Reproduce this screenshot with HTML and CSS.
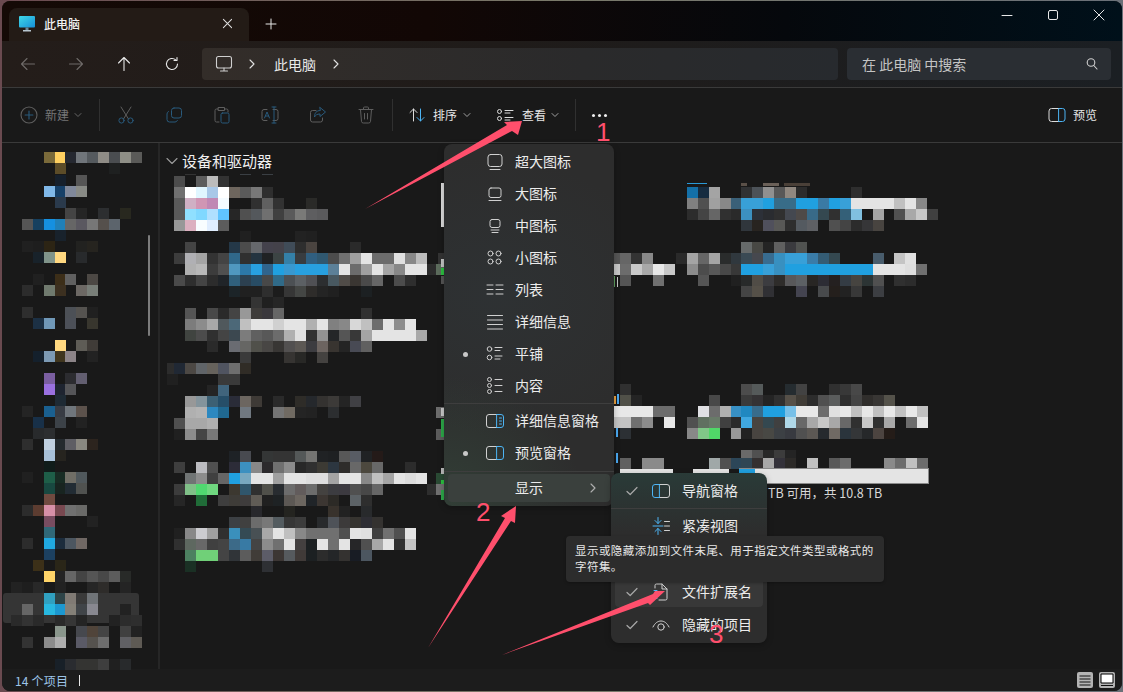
FILE: index.html
```html
<!DOCTYPE html>
<html lang="zh-CN">
<head>
<meta charset="utf-8">
<title>此电脑</title>
<link rel="stylesheet" href="styles.css">
</head>
<body>
<div class="window">
  <header class="titlebar">
    <div class="tab">
      <svg class="tab-ico" viewBox="0 0 18 18"><defs><linearGradient id="pc" x1="0" y1="0" x2="1" y2="1"><stop offset="0" stop-color="#3fd8e8"/><stop offset="1" stop-color="#1690d8"/></linearGradient></defs><rect x="1" y="1" width="16" height="11.5" rx="1" fill="url(#pc)"/><rect x="7.5" y="12.5" width="3" height="2.5" fill="#6b8b9b"/><rect x="5" y="15" width="8" height="1.5" fill="#b8c6cf"/></svg>
      <span class="tab-text">此电脑</span>
      <svg class="tab-close" viewBox="0 0 12 12"><path d="M1.5 1.5l9 9M10.5 1.5l-9 9"/></svg>
    </div>
    <svg class="tab-add" viewBox="0 0 12 12"><path d="M6 1v10M1 6h10"/></svg>
    <div class="winctl">
      <div class="wbtn"><svg viewBox="0 0 12 12"><path d="M1 6.5h10"/></svg></div>
      <div class="wbtn"><svg viewBox="0 0 12 12"><rect x="1.5" y="1.5" width="9" height="9" rx="1.5"/></svg></div>
      <div class="wbtn"><svg viewBox="0 0 12 12"><path d="M1 1l10 10M11 1L1 11"/></svg></div>
    </div>
  </header>

  <nav class="navbar">
    <div class="nbtn dim"><svg viewBox="0 0 16 16"><path d="M14.5 8h-13M7 2.5L1.5 8 7 13.5"/></svg></div>
    <div class="nbtn dim"><svg viewBox="0 0 16 16"><path d="M1.5 8h13M9 2.5L14.5 8 9 13.5"/></svg></div>
    <div class="nbtn"><svg viewBox="0 0 16 16"><path d="M8 14.5v-13M2.5 7L8 1.5 13.5 7"/></svg></div>
    <div class="nbtn"><svg viewBox="0 0 16 16"><path d="M13.5 8a5.5 5.5 0 1 1-1.8-4.1M13 1.5v3h-3"/></svg></div>
    <div class="addr">
      <svg class="addr-pc" viewBox="0 0 18 18"><rect x="1.5" y="1.5" width="15" height="11.5" rx="2"/><path d="M9 13v2.5M5.5 16h7"/></svg>
      <svg class="addr-chev" viewBox="0 0 8 12"><path d="M2 2l4 4-4 4"/></svg>
      <span class="addr-text">此电脑</span>
      <svg class="addr-chev" viewBox="0 0 8 12"><path d="M2 2l4 4-4 4"/></svg>
    </div>
    <div class="search">
      <span>在 此电脑 中搜索</span>
      <svg viewBox="0 0 14 14"><circle cx="6" cy="5.5" r="3.8"/><path d="M8.8 8.5l3.2 3.5"/></svg>
    </div>
  </nav>

  <div class="toolbar">
    <div class="tb-new">
      <svg class="ic" viewBox="0 0 18 18"><circle cx="9" cy="9" r="7.2" class="g"/><path d="M9 5.5v7M5.5 9h7" class="b"/></svg>
      <span class="dimtxt">新建</span>
      <svg class="chev" viewBox="0 0 8 6"><path d="M1 1.5l3 3 3-3"/></svg>
    </div>
    <div class="tb-div"></div>
    <div class="tb-ico"><svg class="ic" viewBox="0 0 20 20"><path d="M5 2l7.5 12M15 2L7.500 14" class="g"/><circle cx="5.500" cy="15.500" r="2.600" class="b"/><circle cx="14.500" cy="15.500" r="2.600" class="b"/></svg></div>
    <div class="tb-ico"><svg class="ic" viewBox="0 0 20 20"><rect x="7.500" y="3" width="10" height="10" rx="2.500" class="b"/><path d="M4.500 6.500A2.500 2.500 0 0 0 3 9v5.500A2.500 2.500 0 0 0 5.500 17H11a2.500 2.500 0 0 0 2.400-1.500" class="b"/></svg></div>
    <div class="tb-ico"><svg class="ic" viewBox="0 0 20 20"><path d="M6 4H4.500A1.500 1.500 0 0 0 3 5.500v10A1.500 1.500 0 0 0 4.500 17H7M13 4h1.500A1.500 1.500 0 0 1 16 5.500V7M6.500 2.500h6v3h-6z" class="g"/><rect x="9" y="8" width="8" height="10" rx="1.500" class="b"/></svg></div>
    <div class="tb-ico"><svg class="ic" viewBox="0 0 20 20"><path d="M7 4.500H4A2 2 0 0 0 2 6.500v7a2 2 0 0 0 2 2h3M13 4.500h3a2 2 0 0 1 2 2v7a2 2 0 0 1-2 2h-3" class="g"/><path d="M4.500 13l2.500-6 2.500 6M5.500 11h3M12 2h4M12 18h4M14 2v16" class="b"/></svg></div>
    <div class="tb-ico"><svg class="ic" viewBox="0 0 20 20"><path d="M14.500 13v2a2 2 0 0 1-2 2H4.500a2 2 0 0 1-2-2V7.500a2 2 0 0 1 2-2H8" class="g"/><path d="M12 2.500L17.500 7 12 11.500V9c-3 0-4.500 1-5.500 3 0-4 2-6.500 5.500-6.500z" class="b"/></svg></div>
    <div class="tb-ico"><svg class="ic" viewBox="0 0 20 20"><path d="M3 4.500h14M7.500 4.500V3a1 1 0 0 1 1-1h3a1 1 0 0 1 1 1v1.500M4.500 4.500l1 12a1.800 1.800 0 0 0 1.800 1.500h5.400a1.800 1.800 0 0 0 1.800-1.500l1-12M8.500 8.500v5.500M11.500 8.500v5.500" class="g"/></svg></div>
    <div class="tb-div tb-div2"></div>
    <div class="tb-sort">
      <svg class="ic" viewBox="0 0 20 20"><path d="M6.500 16V4M3 7.500L6.500 4 10 7.500" class="w"/><path d="M13.500 4v12M10 12.500l3.500 3.500 3.500-3.500" class="bl"/></svg>
      <span>排序</span>
      <svg class="chev" viewBox="0 0 8 6"><path d="M1 1.500l3 3 3-3"/></svg>
    </div>
    <div class="tb-view">
      <svg class="ic" viewBox="0 0 20 20"><circle cx="4.500" cy="6.500" r="2" class="w"/><circle cx="4.500" cy="13.500" r="2" class="w"/><path d="M10 5.500h8M10 8h5M10 12.500h8M10 15h5" class="w"/></svg>
      <span>查看</span>
      <svg class="chev" viewBox="0 0 8 6"><path d="M1 1.500l3 3 3-3"/></svg>
    </div>
    <div class="tb-div tb-div3"></div>
    <div class="tb-more"><i></i><i></i><i></i></div>
    <div class="tb-preview">
      <svg class="ic" viewBox="0 0 20 20"><path d="M12 3.500H4.500A2.500 2.500 0 0 0 2 6v8a2.500 2.500 0 0 0 2.500 2.500H12" class="w"/><path d="M12 3.500h3.500A2.500 2.500 0 0 1 18 6v8a2.500 2.500 0 0 1-2.500 2.500H12z" class="bl"/></svg>
      <span>预览</span>
    </div>
  </div>

  <div class="content">
    <aside class="sidebar"><div class="selrow"></div><div class="sbthumb"></div></aside>
    <main class="main">
      <div class="section">
        <svg viewBox="0 0 12 8"><path d="M1 1.500l5 5 5-5"/></svg>
        <span>设备和驱动器</span>
      </div>
    </main>
  </div>

  <footer class="status">
    <span class="count">14 个项目</span><i class="caret"></i>
    <div class="vbtns">
      <div class="vbtn"><svg viewBox="0 0 16 16"><path d="M2.500 4h11M2.500 7h11M2.500 10h11M2.500 13h11"/></svg></div>
      <div class="vbtn"><svg viewBox="0 0 16 16"><rect x="2" y="2" width="12" height="9" fill="#fff" stroke="#000"/><path d="M2 13.500h12"/></svg></div>
    </div>
  </footer>
</div>

<svg class="mosaic" id="mosaic" viewBox="0 0 1123 692" aria-hidden="true"></svg>
<span class="freeinfo">TB 可用，共 10.8 TB</span>

<div class="menu">
  <div class="item"><span class="mark"></span><svg class="mi" viewBox="0 0 20 20"><rect x="3" y="2.500" width="14" height="12" rx="2.500"/><path d="M5 17.500h10"/></svg><span>超大图标</span></div>
  <div class="item"><span class="mark"></span><svg class="mi" viewBox="0 0 20 20"><rect x="4" y="4" width="12" height="9.500" rx="2"/><path d="M4 16.500h12"/></svg><span>大图标</span></div>
  <div class="item"><span class="mark"></span><svg class="mi" viewBox="0 0 20 20"><rect x="5" y="3.500" width="10" height="8" rx="2"/><path d="M6 14h8M7 16.500h6"/></svg><span>中图标</span></div>
  <div class="item"><span class="mark"></span><svg class="mi" viewBox="0 0 20 20"><circle cx="5.500" cy="5.500" r="2.500"/><circle cx="13.500" cy="5.500" r="2.500"/><circle cx="5.500" cy="13.500" r="2.500"/><circle cx="13.500" cy="13.500" r="2.500"/></svg><span>小图标</span></div>
  <div class="item"><span class="mark"></span><svg class="mi" viewBox="0 0 20 20"><path d="M2 5h6M2 9.500h6M2 14h6M11 5h7M11 9.500h7M11 14h7"/></svg><span>列表</span></div>
  <div class="item"><span class="mark"></span><svg class="mi" viewBox="0 0 20 20"><path d="M2.500 3.500h15M2.500 8h15M2.500 12.500h15M2.500 17h15"/></svg><span>详细信息</span></div>
  <div class="item"><span class="mark"><i></i></span><svg class="mi" viewBox="0 0 20 20"><circle cx="4.500" cy="5" r="2.300"/><circle cx="4.500" cy="13.500" r="2.300"/><path d="M10 3.500h7M10 6.500h5M10 12h7M10 15h5"/></svg><span>平铺</span></div>
  <div class="item"><span class="mark"></span><svg class="mi" viewBox="0 0 20 20"><circle cx="4.500" cy="3.500" r="2"/><circle cx="4.500" cy="9.500" r="2"/><circle cx="4.500" cy="15.500" r="2"/><path d="M10 3.500h7M10 9.500h7M10 15.500h7"/></svg><span>内容</span></div>
  <div class="sep"></div>
  <div class="item"><span class="mark"></span><svg class="mi" viewBox="0 0 20 20"><path d="M12 3.500H4A2.500 2.500 0 0 0 1.500 6v8A2.500 2.500 0 0 0 4 16.500h8"/><path class="bl" d="M12 3.500h4A2.500 2.500 0 0 1 18.500 6v8a2.500 2.500 0 0 1-2.500 2.500h-4zM14.500 7h2M14.500 10h2M14.500 13h2"/></svg><span>详细信息窗格</span></div>
  <div class="item"><span class="mark"><i></i></span><svg class="mi" viewBox="0 0 20 20"><path d="M12 3.500H4A2.500 2.500 0 0 0 1.500 6v8A2.500 2.500 0 0 0 4 16.500h8"/><path class="bl" d="M12 3.500h4A2.500 2.500 0 0 1 18.500 6v8a2.500 2.500 0 0 1-2.500 2.500h-4z"/></svg><span>预览窗格</span></div>
  <div class="sep sep2"></div>
  <div class="item show"><span class="mark"></span><span class="mi"></span><span>显示</span><svg class="more" viewBox="0 0 8 12"><path d="M2 2l4 4-4 4"/></svg></div>
</div>

<div class="submenu">
  <div class="item"><span class="mark"><svg class="check" viewBox="0 0 12 10"><path d="M1 5.500L4.200 8.500 11 1.500"/></svg></span><svg class="mi" viewBox="0 0 20 20"><path d="M8 3.500h8A2.500 2.500 0 0 1 18.500 6v8a2.500 2.500 0 0 1-2.500 2.500H8"/><path class="bl" d="M8 3.500H4A2.500 2.500 0 0 0 1.500 6v8A2.500 2.500 0 0 0 4 16.500h4z"/></svg><span>导航窗格</span></div>
  <div class="sep"></div>
  <div class="item"><span class="mark"></span><svg class="mi" viewBox="0 0 20 20"><path class="bl" d="M7 1.500v6M4 4.500l3 3 3-3M7 18.500v-6M4 15.500l3-3 3 3M2 10h10"/><path d="M13.500 5.500h5M13.500 10h5M13.500 14.500h5"/></svg><span>紧凑视图</span></div>
  <div class="item"></div>
  <div class="sep"></div>
  <div class="item hot"><span class="mark"><svg class="check" viewBox="0 0 12 10"><path d="M1 5.500L4.200 8.500 11 1.500"/></svg></span><svg class="mi" viewBox="0 0 20 20"><path d="M4 6V3.500A1.500 1.500 0 0 1 5.500 2H11l5 5v9.500a1.500 1.500 0 0 1-1.500 1.500H8M11 2v5h5"/><path class="bl" d="M3 8.500h3M3 16.500h3M4.500 8.500v8"/></svg><span>文件扩展名</span></div>
  <div class="item"><span class="mark"><svg class="check" viewBox="0 0 12 10"><path d="M1 5.500L4.200 8.500 11 1.500"/></svg></span><svg class="mi" viewBox="0 0 20 20"><path d="M2 12c2-4 4.800-6 8-6s6 2 8 6"/><circle cx="10" cy="12" r="3.200"/></svg><span>隐藏的项目</span></div>
</div>

<div class="tooltip">显示或隐藏添加到文件末尾、用于指定文件类型或格式的字符集。</div>

<svg class="arrows" viewBox="0 0 1123 692" aria-hidden="true">
  <polygon points="365,209 507,125 504,122 522,121 518,135 512,131"/>
  <polygon points="428,648 505,518 501,516 516,506 515,523 511,521"/>
  <polygon points="502,655 653,594 655,591 665,591 650,605 648,603"/>
  <text x="596" y="141">1</text>
  <text x="476" y="521">2</text>
  <text x="709" y="643">3</text>
</svg>
<script src="mosaic.js"></script>
</body>
</html>
```
FILE: styles.css
```css
* { box-sizing: border-box; }
html, body { margin: 0; height: 100%; }
body {
  position: relative;
  width: 1123px;
  height: 692px;
  overflow: hidden;
  background: linear-gradient(90deg, #6a4a50, #7a7a6a 50%, #6a7078);
  font-family: "Noto Sans CJK SC", "Noto Sans", sans-serif;
  color: #e8e8e8;
  font-size: 12px;
}
svg { display: block; fill: none; stroke-linecap: round; stroke-linejoin: round; }

.window {
  position: absolute;
  inset: 1px 1px 1px 2px;
  display: flex;
  flex-direction: column;
  border-radius: 8px;
  overflow: hidden;
  background: #191919;
}

.titlebar {
  height: 40px;
  flex: none;
  display: flex;
  align-items: flex-end;
  padding-left: 7px;
  background: linear-gradient(90deg, #140a06, #120705 38%, #05080c 70%, #00101a);
}
.tab {
  width: 240px;
  height: 33px;
  display: flex;
  align-items: center;
  padding: 0 16px 2px 9px;
  background: #231b16;
  border-radius: 8px 8px 0 0;
}
.tab-ico { width: 18px; height: 18px; }
.tab-text { margin-left: 8px; font-size: 12px; color: #f2f2f2; font-weight: 500; }
.tab-close { width: 11px; height: 11px; margin-left: auto; stroke: #e0e0e0; stroke-width: 1.1; }
.tab-add { width: 12px; height: 12px; margin: 0 0 11px 16px; stroke: #e8e8e8; stroke-width: 1; }
.winctl { display: flex; margin-left: auto; align-self: flex-start; }
.wbtn { width: 46px; height: 28px; display: flex; align-items: center; justify-content: center; }
.wbtn svg { width: 12px; height: 12px; stroke: #e8e8e8; stroke-width: 1; }

.navbar {
  height: 47px;
  flex: none;
  display: flex;
  align-items: flex-start;
  padding: 7px 11px 0 2px;
  background: linear-gradient(90deg, #241d1a, #1f1b19 45%, #1b1f23);
  border-bottom: 1px solid #3a3a3a;
}
.nbtn { width: 48px; height: 32px; flex: none; display: flex; align-items: center; justify-content: center; }
.nbtn svg { width: 16px; height: 16px; stroke: #e8e8e8; stroke-width: 1.1; }
.nbtn.dim svg { stroke: #6e6a68; }
.addr {
  flex: 1;
  height: 32px;
  margin: 0 9px 0 6px;
  display: flex;
  align-items: center;
  padding-left: 13px;
  border-radius: 4px;
  background: linear-gradient(90deg, #332d29, #2a2a2b 60%, #272a2e);
}
.addr-pc { width: 18px; height: 18px; stroke: #cfcfcf; stroke-width: 1.1; }
.addr-chev { width: 8px; height: 12px; margin-left: 15px; stroke: #e0e0e0; stroke-width: 1.1; }
.addr-chev:last-child { margin-left: 16px; }
.addr-text { margin-left: 18px; font-size: 14px; color: #e8e8e8; }
.search {
  width: 264px;
  height: 32px;
  flex: none;
  display: flex;
  align-items: center;
  justify-content: space-between;
  padding: 0 12px 0 15px;
  border-radius: 4px;
  background: #2a2e33;
  font-size: 14px;
  color: #c4c4c4;
}
.search svg { width: 14px; height: 14px; stroke: #d0d0d0; stroke-width: 1.1; }

.toolbar {
  height: 55px;
  flex: none;
  display: flex;
  align-items: center;
  padding-left: 12px;
  background: #191919;
  border-bottom: 1px solid #3a3a3a;
  font-size: 12px;
  color: #e6e6e6;
}
.toolbar span { margin-top: -2px; }
.ic { width: 20px; height: 20px; flex: none; stroke-width: 1; }
.ic .g { stroke: #5e5e5e; }
.ic .b { stroke: #295a7c; }
.ic .w { stroke: #dcdcdc; }
.ic .bl { stroke: #4cb4f4; }
.chev { width: 8px; height: 6px; flex: none; stroke: #a0a0a0; stroke-width: 1; }
.dimtxt { color: #767676; }
.tb-new { width: 85px; display: flex; align-items: center; gap: 6px; padding-left: 5px; }
.tb-new .chev { stroke: #666; margin-left: -1px; }
.tb-div { width: 1px; height: 32px; background: #303030; flex: none; margin-right: 2px; }
.tb-div2 { margin: 0 0 0 2px; }
.tb-div3 { margin: 0; }
.tb-ico { width: 48px; display: flex; justify-content: center; flex: none; }
.tb-sort { display: flex; align-items: center; gap: 6px; width: 88px; padding-left: 14px; flex: none; }
.tb-view { display: flex; align-items: center; gap: 6px; width: 94px; padding-left: 14px; flex: none; }
.tb-view .ic { margin-right: 1px; }
.tb-view .chev { margin-left: -1px; }
.tb-more { display: flex; gap: 3px; margin-left: 16px; }
.tb-more i { width: 3px; height: 3px; border-radius: 50%; background: #f0f0f0; }
.tb-preview { display: flex; align-items: center; gap: 6px; margin-left: auto; padding-right: 25px; }

.content { flex: 1; min-height: 0; display: flex; background: #191919; }
.sidebar { flex: none; position: relative; border-right: 2px solid #262626; width: 158px; }
.selrow { position: absolute; left: 1px; right: 19px; top: 450px; height: 30px; background: #353535; border-radius: 3px; }
.sbthumb { position: absolute; left: 146px; top: 92px; width: 2px; height: 101px; background: #7c7c7c; border-radius: 1px; z-index: 4; }
.main { flex: 1; padding: 7px 0 0 6px; }
.section { display: flex; align-items: center; gap: 4px; height: 20px; font-size: 15px; color: #f0f0f0; }
.section svg { width: 12px; height: 8px; margin-top: 2px; stroke: #9a9a9a; stroke-width: 1.1; }

.status {
  height: 22px;
  flex: none;
  display: flex;
  align-items: center;
  padding-left: 13px;
  background: #1c1c1c;
}
.count { color: #9cc4e8; font-size: 12px; letter-spacing: .2px; }
.caret { width: 1px; height: 11px; margin-left: 11px; background: #e8e8e8; }
.vbtns { display: flex; gap: 6px; margin-left: auto; padding-right: 7px; }
.vbtn { width: 16px; height: 16px; background: #b4b4b4; border-radius: 2px; }
.vbtn svg { width: 16px; height: 16px; stroke: #111; stroke-width: 1; stroke-linecap: butt; }

.mosaic { position: absolute; left: 0; top: 0; width: 1123px; height: 692px; z-index: 1; pointer-events: none; stroke-linecap: butt; shape-rendering: crispEdges; }
.freeinfo { position: absolute; left: 768px; top: 485px; z-index: 1; font-size: 12.5px; line-height: 16px; color: #d8d8d8; }

.menu, .submenu {
  position: absolute;
  z-index: 2;
  border-radius: 8px;
  font-size: 14px;
  color: #ececec;
  box-shadow: 0 2px 6px rgba(0,0,0,.25);
}
.menu {
  left: 444px;
  top: 144px;
  width: 170px;
  height: 362px;
  padding: 2px 4px 4px;
  background:
    radial-gradient(140px 130px at 0 100%, rgba(60,100,75,.32), transparent),
    radial-gradient(170px 140px at 30% 42%, rgba(50,70,80,.18), transparent),
    #2d2d2d;
}
.submenu {
  left: 611px;
  top: 473px;
  width: 156px;
  height: 170px;
  z-index: 3;
  padding: 2px 4px;
  background:
    linear-gradient(180deg, rgba(40,64,60,.7), transparent 60px),
    #2d2d2d;
}
.item { height: 32px; display: flex; align-items: center; border-radius: 4px; }
.item > span:not(.mark):not(.mi) { margin-top: -2px; }
.mark { width: 34px; flex: none; display: flex; justify-content: center; }
.mark i { width: 5px; height: 5px; border-radius: 50%; background: #c8c8c8; }
.mi { width: 20px; height: 20px; flex: none; margin: 0 10px 0 3px; stroke: #d0d0d0; stroke-width: 1; }
.mi .bl { stroke: #4cb4f4; }
.submenu .mi { margin: 0 11px 0 2px; }
.check { width: 12px; height: 10px; stroke: #a8a8a8; stroke-width: 1.2; }
.sep { height: 1px; margin: 1px -4px; background: #3e3e3e; }
.sep2 { margin: 2px -4px; }
.item.show { height: 28px; background: #3a403d; }
.more { width: 8px; height: 12px; margin: 0 13px 0 auto; stroke: #b0b0b0; stroke-width: 1.1; }
.item.hot { height: 30px; margin-bottom: 2px; background: #383838; }

.tooltip {
  position: absolute;
  left: 566px;
  top: 536px;
  width: 318px;
  height: 46px;
  z-index: 4;
  padding: 6px 6px 6px 9px;
  border-radius: 4px;
  background: #2c2c2c;
  font-size: 11.5px;
  letter-spacing: .45px;
  line-height: 16px;
  color: #e8e8e8;
  box-shadow: 0 1px 3px rgba(0,0,0,.3);
}

.arrows { position: absolute; left: 0; top: 0; width: 1123px; height: 692px; z-index: 5; pointer-events: none; }
.arrows polygon { fill: #ff4f6c; }
.arrows text { fill: #ff4f6c; font-family: "Liberation Sans", sans-serif; font-size: 26px; }
```
FILE: mosaic.js
```js
var R = [
"152|44:7a6a3a 55:ffd060 65:252830 76:70757a 87:555a5e 98:8f8c86 109:4a4d50 120:8e8e86 131:5a5a58",
"163|55:5c4c28 109:1e2020",
"175|55:16202c 76:555",
"186|44:80b8e8 55:164068 65:80889a 76:888a85",
"197|55:2a3a4c",
"208|65:444 76:252525 98:2c2e30 120:28281f",
"219|22:555 33:16405f 44:1590e0 55:2080b8 65:666 76:5a5860 87:777 98:55504c 109:5c646c",
"230|55:18222c",
"241|22:202020 33:1e1e1e 44:2c2414 76:222220 87:26241f",
"252|33:18222a 44:80948a 55:ffd880 76:282a2c",
"274|33:202020 55:3c2e18 65:606060 87:4c4844",
"285|22:2c2c2c 44:707a6e 55:3c3020 76:6c6864 87:787e78",
"307|22:2e2e2e 65:4c5056 76:555350 87:202020",
"318|33:1c3044 44:7098b8 65:4c5058 87:38362e",
"340|55:ffd880 76:5e5c56 87:403c38",
"351|33:14202c 44:7c9ab4 55:40361e 65:8c8488 87:222",
"373|44:7a5ea0 65:2c2c30 76:625e70",
"384|44:9a70e0 55:1e2430 65:555558",
"395|55:1e2a34",
"406|22:242424 44:1a6090 55:383c44 65:70767c 76:5c524c",
"417|33:183048 55:3c4248 76:222",
"428|33:282a2c 44:2c2e30",
"439|22:2e2e2e 44:c0d0e0 55:242a2e 65:5e5e64 76:8a8880 87:2c241e",
"450|44:a8c0d8 55:26241f",
"461|44:101c1a",
"472|22:202020 44:1e5e48 55:182c24 65:706e66 76:50585c",
"483|44:184840 55:182420 65:222c34 76:505250",
"494|44:704a40",
"505|22:2c2c2c 33:5c3c30 44:d890a8 55:784850 65:707070 76:6a6a68",
"516|44:784c60 87:222",
"527|44:306878",
"538|22:2c2c2c 44:20a8e0 55:1c2c3c 65:4c5660 76:706864",
"549|44:1c4060",
"560|33:3c3018 55:2a2618",
"571|44:ffd468 55:242424 65:666 76:444 87:555 98:484848 109:5c5c5c 120:282a28",
"582|11:222 22:1e1e1e 33:282828 55:222 87:262626 98:2e2c2a 120:242424",
"593|44:30a0c0 55:2e4448 65:807a74 76:3a3a3a 87:707478",
"604|22:666 44:28b8e0 55:1c98d0 65:848078 76:404448 87:888890 120:222",
"615|11:2a2a2a 22:333 33:2a2a2a 55:2a2a2a 65:363636 76:242424 109:222 120:2c2c2c 131:2e2e2e",
"626|55:8a968c 76:46484e 87:50443a 98:444 120:404040 131:222",
"637|22:333 44:8c8c8c 55:aeaeae 76:5a5a66 87:55524e 98:6e6e6e 120:606064 131:5e5a54",
"659|55:182028 65:2a2c30 76:343432 87:343432 98:3e3e3e 109:202020 120:282a2c",
"176|174:4c4c4c 196:5c5c5c 207:bcbcbc 218:333",
"187|174:707070 185:fff 196:e0f6ff 207:a8c8e8 218:fff 229:6e665e 240:5a5a5a 251:787878 262:2e2e2e",
"198|174:5a5a5a 185:d0b0c4 196:d096b4 207:c088b4 218:f4fbff 251:303030 262:606060 273:323232 306:2a2a28",
"209|174:5a5a5a 185:90e0ff 196:80d8ff 207:b0e0ff 218:60c4ff 229:262626 240:505050 251:54585c 262:707070 273:404040 284:5a5a5a 295:7a7a78 306:5e5e60 317:5a5a5c",
"220|174:989898 185:dcb0c0 196:f8fdff 207:e0eeff 218:5c5c5c",
"231|240:202020 295:222 306:202020",
"242|185:444 229:243848 240:4c4c4c 251:66686c 262:44424c 273:44424a 284:404c58 295:2e2e2e 306:4a4440 350:2a2a2a",
"253|174:3c3c3c 185:b0b0b4 196:a4a4a4 207:333 218:444 229:30688a 240:303030 251:243440 262:202224 273:3c4444 284:3480a8 295:383c40 306:305f80 317:305870 328:4c4c4c 339:707070 350:a0a0a0 361:e4e4e4 372:6c6c6c 383:6c6c6c 394:e0e0e0 405:888 416:bcbcbc 438:333",
"264|185:b0b0b0 196:b8b8b8 207:3c3c3c 218:505050 229:5098c0 240:2c78a8 251:28a0e0 262:30648c 273:20a0e0 284:3898d0 295:28a0e0 306:28a0e0 317:28a0e0 328:5c8098 339:e4e4e4 350:6c6c6c 361:a0a0a0 372:e4e4e4 383:a4a4a4 394:888 405:e4e4e4 416:e4e4e4 427:2c2c2c 436:5c6c5c",
"275|174:4a4a4a 185:2e2e2e 196:444 207:2c2c2c 218:202428 229:30607c 240:2c4050 251:284c64 262:484848 273:306a88 284:4c5054 295:5c6064 306:505054 317:2c2e30 328:485860 339:504c48 350:3a3632 361:4a4a4a 372:666 394:4c4c4c 405:2e2e2e",
"286|229:1c2428 240:202020 251:202020 262:2e2e2e 273:1c1c1c 284:363636 295:444644 306:2e2c2a 317:242424 328:202020 361:1c2022",
"297|251:343434 262:202020 273:262626",
"308|185:555 207:484848 218:2a2a2a 229:444 240:989898 251:3e3c3a 262:3a383c 273:666 361:303030",
"319|185:7c7c7c 196:8c8c8c 207:a8a8a8 218:50585c 229:4c6878 240:c0c0c0 251:e4e4e4 262:e4e4e4 273:d0d0d0 284:e4e4e4 295:e4e4e4 306:b0b0b0 317:e4e4e4 328:808080 339:888 350:d8d8d8 361:c0c0c0 372:6c6c6c 383:e4e4e4 394:8c8c8c 405:e4e4e4",
"330|185:404440 196:4c4c4c 207:303030 218:444 229:3c4850 240:7c7c7c 251:606060 262:585858 273:6c6c6c 284:b0b0b0 295:e0e0e0 306:303030 317:929292 328:242628 339:555 350:383838 361:a4a4a4 372:e4e4e4 383:e4e4e4 394:e4e4e4 405:e4e4e4 416:a8a8a8",
"341|207:2a2a2a 229:6a6c72 240:666664 251:50504a 262:484644 273:383634 284:525050 295:5c5854 306:3c3c40 317:6c6460 328:383430 339:242424 350:484a54 361:606060",
"352|240:3a3a3a 284:363432 295:282826 317:444240",
"363|167:2c2c2c 174:202834 185:4c4844 196:606468 207:66625c 218:505460 229:6e6e6e 240:302c26",
"374|167:202020 218:3a3a3a 229:3a3a3a",
"385|207:242424 218:40647c",
"396|185:989898 196:84949c 207:3c6074 218:264e68 229:2a2c38 240:6c6660 251:3e3a36 273:2a2a2a 295:2e2c28 306:25282c 317:343230 328:3c3a38 339:242424 350:404044",
"407|185:b0b0b0 196:b4b4b4 207:2c88c0 218:206890 240:707880 273:747474 284:706a62 295:242424 306:222 328:2c2e30 436:6c6c6c",
"418|174:505050 185:a8a8a8 196:a8a8a8 207:b0b0b0",
"429|174:202020 185:8c8c8c 196:444 207:787878 436:5c5c5c",
"451|229:1e2226 240:484a50 262:343636 273:343434 284:343434 295:545858 306:747472 317:202224 328:1e2022 339:585858 350:585c64 361:202224 372:241a18",
"462|174:3e3e3e 196:bcbcc0 207:505050 229:2c2c38 240:3c90c0 251:888 262:2c2a2c 273:707070 284:8c8c8c 295:282828 306:303030 317:3c3a34 328:2c3640 339:2e2c2a 350:686868 361:4c483e 372:686868 405:2c2c2c",
"473|185:707474 196:8c8c8c 207:404040 218:666 229:20a0e0 240:78a8c0 251:e4e4e4 262:e4e4e4 273:a0a0a0 284:e4e4e4 295:e4e4e4 306:dedede 317:dedede 328:a4a4a4 339:e4e4e4 350:e4e4e4 361:888 372:c0c0c0 383:a4a4a4 394:e4e4e4 405:dcdcdc 416:e4e4e4 436:2a4a34",
"484|174:3c3c3c 185:80c088 196:50d870 207:70d880 229:3c3830 240:30566c 251:303030 262:50504a 273:282c30 284:6c6c6c 295:625c5c 306:6c6c6c 317:444240 328:3c3c40 339:3c3a40 350:505050 361:484848 372:666 427:2e2e2e 436:707070",
"495|174:262626 196:206c38 218:3e3e3e 229:3e3c38 240:3e3c3c 251:605c56 262:202020 273:1e2224 284:5c5854 295:6c6660 306:202428 317:3c3632 328:2c2a26 350:5c6266 361:2e2e2e",
"506|251:28282c 284:242420 328:38322c 339:222 361:282a2c",
"517|229:3c4044 240:404040 251:6c6c6c 262:787878 273:545c60 284:363636 295:3c3c3c 317:282a2c 328:4e5258 339:3c3a3a 350:363430 361:2e2e34 372:343230",
"528|174:202020 185:888 196:ccccd0 207:a0a0a0 218:303030 229:3a90bc 240:344a54 251:485054 262:a8a8a8 273:e4e4e4 284:c0c0c0 295:888 306:707070 317:707070 328:707070 339:505050 350:e4e4e4 361:e0e0e0 372:404040 383:707070 394:505050 405:e4e4e4",
"539|174:303030 185:5e6860 196:686868 207:404040 218:444 229:3c6a88 240:387aa4 251:444 262:8c8c8c 273:707070 284:e4e4e4 295:444040 306:1c2022 317:e4e4e4 328:707070 339:e4e4e4 350:262628 361:505050 372:a8a8a8 383:e4e4e4 394:303030 405:c4c4c4",
"550|185:4c8060 196:70d078 207:70d078 218:444 229:303438 240:5c5c5c 251:403c38 262:5c5c68 273:3c3634 284:565a5e 295:403a38 306:1c2022 317:2c2c2c 328:242628 339:343230 350:181c24 361:4c5660",
"561|185:1a3024 262:2e3034",
"187|687:1470a8 698:162c40 709:a4a4a4 741:303234 752:4c5258 763:909090 774:585858 785:908880 796:2c2c2c 851:2e2e2e",
"198|687:808080 698:505050 709:a0a0a0 720:888 731:3a6078 741:38a0d8 752:38a0d8 763:20a0e0 774:386c88 785:386c88 796:20a0e0 807:20a0e0 818:3a7aa4 829:20a0e0 840:38a0d8 851:e4e4e4 862:e4e4e4 873:e4e4e4 884:e4e4e4 894:c0c0c0 905:e4e4e4 916:888",
"209|687:2c2c2c 698:444 709:666 720:303030 731:2a2a2a 741:3c90c0 752:2c3038 763:2a2c30 774:303030 785:444850 796:4e4a48 807:386a88 818:344850 829:303030 840:346078 851:80c0e0 873:a4a4a4 894:505050 905:a8a8a8 916:c8c8c8 927:404040",
"220|741:30363c 752:282420 763:50505c 774:585856 785:2e2e2e 796:545a60 807:5e6064 829:505050 840:444 851:2c2c2c 862:363638 873:484440",
"242|741:666a6a 752:484844 763:242424 774:606060 785:3a3a3e 796:505250",
"253|609:555 620:666 631:333 642:888 676:2a2a2a 687:a4a4a4 698:666 709:a4a4a4 720:2a2c2c 731:30383e 741:3a4a54 752:46484e 763:386c90 774:3890c0 785:38a0d8 796:38a0d8 807:3a7ca8 818:345c74 829:344850 873:485c6c 894:c4c4c4 905:e0e0e0",
"264|609:c8c8c8 620:6c6c6c 631:c8c8c8 642:a8a8a8 653:e8e8e8 664:c8c8c8 687:8c8c8c 698:4c4c4c 709:585858 720:484848 731:383838 741:20a0e0 752:20a0e0 763:38a0d8 774:3890c0 785:20a0e0 796:20a0e0 807:20a0e0 818:20a0e0 829:20a0e0 840:20a0e0 851:20a0e0 862:20a0e0 873:e4e4e4 884:e4e4e4 894:e4e4e4 905:dedede 916:707070",
"275|620:555 653:707070 698:555 731:202020 741:282a2a 752:504c46 763:3c3c40 774:2e2c2a 785:58585a 796:5c6064 807:282624 818:2c2c34 829:242020 840:343c44 851:464440 862:2c3434 873:505050 894:303030 905:2c2c2c",
"286|741:444 752:555048 763:303034 796:444450 818:484a4c 829:241f1c 840:222 851:383838 873:3c3e42",
"384|620:303030 741:4c4c4c 752:555a5a 785:252c30 796:424242 829:303030 840:383838 851:484848",
"395|620:505048 631:242424 709:484848 741:3a3a3a 752:343234 763:242424 774:303030 785:565048 796:403c36 807:2c2c2c 818:505050 829:5a5c5c 840:2e2e2e 851:444 862:302e2c 873:383634 884:54524a",
"406|609:e8e8e8 620:e8e8e8 631:e8e8e8 642:e8e8e8 653:6c6c6c 664:6c6c6c 698:e0e0e4 709:6c6c6c 720:b0b0b0 731:3890c4 741:2088c0 752:386c8c 763:20a0e0 774:20a0e0 785:78c0e8 796:e8e8e8 807:e8e8e8 818:6c6c6c 829:e0e0e0 840:e8e8e8 851:c0c0c0 862:e8e8e8 873:c0c0c0 884:e8e8e8 895:c0c0c0 906:e8e8e8 917:c0c0c0",
"417|609:c4c4c4 620:c4c4c4 631:707070 642:8c8c8c 664:e8e8e8 687:505050 698:607060 709:687a68 720:404040 731:2a2a2a 741:40a8e0 752:484440 763:344850 774:404040 785:b0d8e8 796:686868 807:a8a8a8 818:c8c8c8 829:a8a8a8 840:686868 851:303030 862:c8c8c8 873:303030 884:a8a8a8 906:6c6c6c 917:e4e4e4",
"428|620:2c3034 687:888 698:80c888 709:50d868 731:989898 741:222 752:484440 763:484844 774:3c4044 785:383a40 796:505050 807:5c5854 818:262a2e 829:706a64 840:2a343c 851:343638 862:26282a 873:4c4440 884:241c18",
"450|741:6a6a6a 752:505050 763:282828 774:3c3c3c 785:242424",
"458|620:606060 642:8a8a8a 653:8a8a8a 709:a0a8a8 720:505050 731:2c4658 741:304654 752:343030 763:a8a8a8 774:34323a 785:2c2a28 807:c0c0c0 829:585858 840:6c6c6c 884:8a8a8a 895:6c6c6c 906:c0c0c0 917:6c6c6c"
];
var E = [
[441,183,3,44,"#dcdcdc"],[441,259,3,8,"#c4c4c4"],[441,268,3,7,"#2cc040"],[441,276,3,8,"#555"],
[441,408,3,8,"#c8c8c8"],[441,419,3,18,"#2ca848"],[441,468,3,6,"#bbb"],[441,480,3,4,"#2cc040"],[441,490,3,10,"#2ca848"],
[620,469,53,4,"#e4e4e4"],[693,469,36,4,"#e4e4e4"],[739,469,16,4,"#20a0e0"],[755,469,173,14,"#e4e4e4"],
[739,468,189,1,"#8a8a8a"],[755,483,173,1,"#8a8a8a"],[928,468,1,16,"#8a8a8a"],
[687,183,20,1,"#2a9ad8"],[741,183,6,3,"#5a5048"],[763,183,16,3,"#6a6058"],[784,183,26,3,"#4a4038"],
[185,174,11,1,"#333"],[240,174,11,1,"#3a3f44"],[262,174,11,1,"#3a3f44"],
[614,396,2,8,"#e8a040"],[617,394,2,10,"#4aa8f0"],[616,428,2,9,"#4aa8f0"],[616,453,2,10,"#4aa8f0"],[614,276,1,11,"#60a060"],[617,277,1,10,"#c8c8c8"]
];
var s = document.getElementById("mosaic"), NS = "http://www.w3.org/2000/svg";
function add(x, y, w, h, f) {
  var r = document.createElementNS(NS, "rect");
  r.setAttribute("x", x); r.setAttribute("y", y);
  r.setAttribute("width", w); r.setAttribute("height", h);
  r.setAttribute("fill", f);
  s.appendChild(r);
}
R.forEach(function (row) {
  var p = row.split("|"), y = +p[0];
  p[1].split(" ").forEach(function (c) {
    var q = c.split(":");
    add(+q[0], y, 11, 11, "#" + q[1]);
  });
});
E.forEach(function (e) { add(e[0], e[1], e[2], e[3], e[4]); });
```
